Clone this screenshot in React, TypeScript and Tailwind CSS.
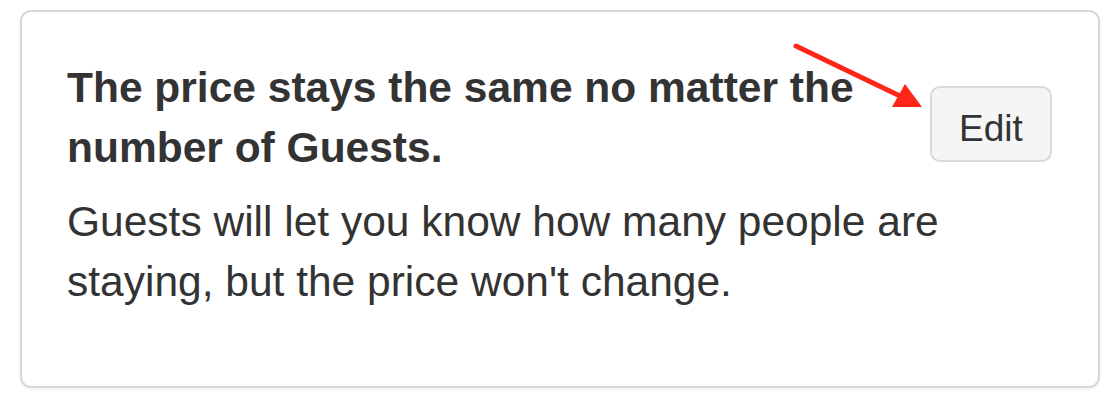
export default function App() {
  return (
    <div className="relative w-[1119px] h-[403px] bg-white font-['Liberation_Sans',Arial,sans-serif] text-[#333]">
      <div className="ml-[20px] mt-[10px] w-[1080px] h-[378px] rounded-[11px] border-2 border-[#d8d8d8] bg-white shadow-[0_2px_3px_rgba(0,0,0,0.06)] pt-[46px] pl-[45px] pr-[46px]">
        <div className="flex items-start gap-[40px]">
          <h2 className="flex-1 text-[42.5px] leading-[60px] font-bold">
            The price stays the same no matter the number of Guests.
          </h2>
          <button className="mt-[28px] w-[122px] h-[76px] rounded-[10px] border-2 border-[#d9d9d9] bg-[#f5f5f5] text-[37px] leading-[37px] pt-[22px] pb-[13px] text-[#333]">
            Edit
          </button>
        </div>
        <p className="mt-[14px] text-[42.5px] leading-[60px]">
          Guests will let you know how many people are staying, but the price won't change.
        </p>
      </div>

      {/* annotation arrow */}
      <svg className="absolute left-0 top-0 pointer-events-none" width="1119" height="403">
        <line x1="796" y1="36" x2="900" y2="86" stroke="#ff2618" strokeWidth="5" strokeLinecap="round" />
        <polygon points="922,97 892,97 905,74" fill="#ff2618" />
      </svg>
    </div>
  );
}
